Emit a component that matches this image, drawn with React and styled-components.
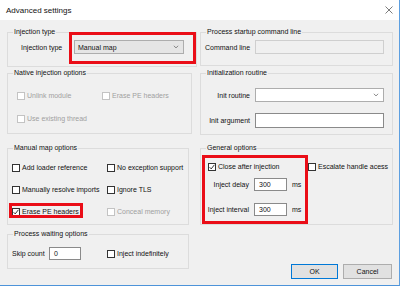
import React from 'react';
import styled, { createGlobalStyle } from 'styled-components';

const GlobalStyle = createGlobalStyle`
  html, body {
    margin: 0;
    padding: 0;
    background: #ffffff;
  }
  body {
    font-family: "Liberation Sans", Arial, sans-serif;
    font-size: 7px;
    color: #111111;
  }
`;

const Window = styled.div`
  width: 400px;
  height: 286px;
  box-sizing: border-box;
  background: #f0f0f0;
  border-right: 1px solid #5d9fe0;
  border-bottom: 1px solid #4d93d9;
  display: flex;
  flex-direction: column;
`;

const TitleBar = styled.div`
  height: 20px;
  flex: none;
  background: #ffffff;
  display: flex;
  align-items: center;
  justify-content: space-between;
  padding: 0 6px 0 6px;
  font-size: 8px;
`;

const Body = styled.div`
  display: grid;
  grid-template-columns: 193px 193px;
  padding-left: 7px;
  align-items: start;
`;

const Column = styled.div`
  display: flex;
  flex-direction: column;
`;

const Group = styled.div`
  position: relative;
  box-sizing: border-box;
  width: ${props => props.$w}px;
  height: ${props => props.$h}px;
  margin-top: ${props => props.$mt}px;
  border: 1px solid #dcdcdc;
`;

const Legend = styled.span`
  position: absolute;
  top: -6px;
  left: 5px;
  padding: 0 1px;
  line-height: 10px;
  background: #f0f0f0;
  white-space: nowrap;
`;

const Highlight = styled.div`
  position: absolute;
  box-sizing: border-box;
  left: ${props => props.$x}px;
  top: ${props => props.$y}px;
  width: ${props => props.$w}px;
  height: ${props => props.$h}px;
  border: 3px solid #ea0d17;
  pointer-events: none;
`;

const FieldGrid = styled.div`
  display: grid;
  grid-template-columns: ${props => props.$cols};
  column-gap: ${props => props.$colGap || 0}px;
  row-gap: ${props => props.$rowGap || 0}px;
  padding: ${props => props.$pad};
  margin-top: ${props => props.$mt || 0}px;
  align-items: center;
`;

const Label = styled.span`
  text-align: ${props => (props.$right ? 'right' : 'left')};
  padding-left: ${props => props.$indent || 0}px;
  white-space: nowrap;
  line-height: 9px;
`;

const Combo = styled.div`
  box-sizing: border-box;
  height: ${props => props.$h}px;
  border: 1px solid #adadad;
  background: ${props => (props.$flat ? '#e5e5e5' : '#ffffff')};
  display: flex;
  align-items: center;
  justify-content: space-between;
  padding: 0 4px 0 3px;
`;

const TextBox = styled.div`
  box-sizing: border-box;
  height: ${props => props.$h}px;
  width: ${props => (props.$w ? `${props.$w}px` : 'auto')};
  border: 1px solid ${props => (props.$disabled ? '#cfcfcf' : '#8a8a8a')};
  background: ${props => (props.$disabled ? '#f0f0f0' : '#ffffff')};
  display: flex;
  align-items: center;
  padding-left: 4px;
`;

const CheckRow = styled.label`
  display: flex;
  align-items: center;
  height: 9px;
  gap: 2px;
  white-space: nowrap;
  color: ${props => (props.$disabled ? '#a0a0a0' : '#111111')};
`;

const Box = styled.span`
  box-sizing: border-box;
  width: 8px;
  height: 8px;
  flex: none;
  background: #ffffff;
  border: 1px solid ${props => (props.$disabled ? '#c3c3c3' : '#333333')};
  display: flex;
  align-items: center;
  justify-content: center;
`;

const TopChecks = styled.div`
  display: grid;
  grid-template-columns: 100px auto;
  padding: 13px 0 0 7px;
`;

const Unit = styled.span`
  line-height: 9px;
`;

const ButtonRow = styled.div`
  display: flex;
  justify-content: flex-end;
  gap: 5px;
  margin-top: 39px;
  padding-right: 1px;
`;

const Button = styled.div`
  box-sizing: border-box;
  width: ${props => props.$w}px;
  height: 15px;
  background: #e1e1e1;
  border: 1px solid ${props => (props.$primary ? '#0078d7' : '#adadad')};
  display: flex;
  align-items: center;
  justify-content: center;
`;

const Chevron = () => (
  <svg width="6" height="4" viewBox="0 0 6 4">
    <polyline points="0.8,0.8 3,2.9 5.2,0.8" fill="none" stroke="#707070" strokeWidth="0.8" />
  </svg>
);

const Check = ({ label, checked, disabled }) => (
  <CheckRow $disabled={disabled}>
    <Box $disabled={disabled}>
      {checked && (
        <svg width="6" height="6" viewBox="0 0 6 6">
          <polyline points="0.6,3.2 2.2,4.9 5.4,0.8" fill="none" stroke="#222" strokeWidth="0.9" />
        </svg>
      )}
    </Box>
    {label}
  </CheckRow>
);

export default function App() {
  return (
    <>
      <GlobalStyle />
      <Window>
        <TitleBar>
          <span>Advanced settings</span>
          <svg width="8" height="8" viewBox="0 0 8 8">
            <line x1="0.5" y1="0.5" x2="7.5" y2="7.5" stroke="#444" strokeWidth="0.7" />
            <line x1="7.5" y1="0.5" x2="0.5" y2="7.5" stroke="#444" strokeWidth="0.7" />
          </svg>
        </TitleBar>
        <Body>
          <Column>
            <Group $w={190} $h={35} $mt={12}>
              <Legend>Injection type</Legend>
              <FieldGrid $cols="66px 110px" $pad="7px 0 0 0">
                <Label $indent={13}>Injection type</Label>
                <Combo $h={14} $flat>
                  <span>Manual map</span>
                  <Chevron />
                </Combo>
              </FieldGrid>
              <Highlight $x={61} $y={-1} $w={127} $h={32} />
            </Group>

            <Group $w={185} $h={61} $mt={6}>
              <Legend>Native injection options</Legend>
              <FieldGrid $cols="85px auto" $rowGap={14} $pad="17px 0 0 9px">
                <Check label="Unlink module" disabled />
                <Check label="Erase PE headers" disabled />
                <Check label="Use existing thread" disabled />
              </FieldGrid>
            </Group>

            <Group $w={182} $h={77} $mt={14}>
              <Legend>Manual map options</Legend>
              <FieldGrid $cols="95px auto" $rowGap={13} $pad="14px 0 0 4px">
                <Check label="Add loader reference" />
                <Check label="No exception support" />
                <Check label="Manually resolve imports" />
                <Check label="Ignore TLS" />
                <Check label="Erase PE headers" checked />
                <Check label="Conceal memory" disabled />
              </FieldGrid>
              <Highlight $x={1} $y={54} $w={74} $h={15} />
            </Group>

            <Group $w={182} $h={35} $mt={9}>
              <Legend>Process waiting options</Legend>
              <FieldGrid $cols="37px 58px auto" $pad="12px 0 0 4px">
                <Label>Skip count</Label>
                <TextBox $h={13} $w={32}>0</TextBox>
                <Check label="Inject indefinitely" />
              </FieldGrid>
            </Group>
          </Column>

          <Column>
            <Group $w={193} $h={34} $mt={12}>
              <Legend>Process startup command line</Legend>
              <FieldGrid $cols="54px 129px" $pad="7px 0 0 0">
                <Label $indent={4}>Command line</Label>
                <TextBox $h={14} $disabled />
              </FieldGrid>
            </Group>

            <Group $w={193} $h={62} $mt={7}>
              <Legend>Initialization routine</Legend>
              <FieldGrid $cols="49px 129px" $colGap={5} $rowGap={11} $pad="14px 0 0 0">
                <Label $right>Init routine</Label>
                <Combo $h={14}>
                  <span />
                  <Chevron />
                </Combo>
                <Label $right>Init argument</Label>
                <TextBox $h={15} />
              </FieldGrid>
            </Group>

            <Group $w={193} $h={77} $mt={13}>
              <Legend>General options</Legend>
              <TopChecks>
                <Check label="Close after injection" checked />
                <Check label="Escalate handle acess" />
              </TopChecks>
              <FieldGrid $cols="48px 33px auto" $colGap={5} $rowGap={12} $mt={7}>
                <Label $right>Inject delay</Label>
                <TextBox $h={13}>300</TextBox>
                <Unit>ms</Unit>
                <Label $right>Inject interval</Label>
                <TextBox $h={13}>300</TextBox>
                <Unit>ms</Unit>
              </FieldGrid>
              <Highlight $x={1} $y={6} $w={106} $h={69} />
            </Group>

            <ButtonRow>
              <Button $w={47} $primary>OK</Button>
              <Button $w={49}>Cancel</Button>
            </ButtonRow>
          </Column>
        </Body>
      </Window>
    </>
  );
}
